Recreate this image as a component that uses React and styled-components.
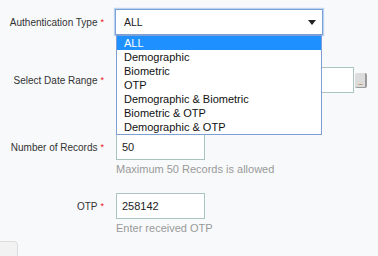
import React from 'react';
import styled, { createGlobalStyle } from 'styled-components';

const GlobalStyle = createGlobalStyle`
    html, body {
        margin: 0;
        padding: 0;
        background: #f8f9fb;
        font-family: "Liberation Sans", Arial, sans-serif;
        overflow: hidden;
    }
`

const Form = styled.div`
    padding-top: 9px;
    width: 378px;
    height: 256px;
    box-sizing: border-box;
    overflow: hidden;
`

const FormGroup = styled.div`
    display: grid;
    grid-template-columns: 104px 1fr;
    column-gap: 12px;
    margin-bottom: ${props => props.gap}px;
`

const Label = styled.div`
    height: 26px;
    display: flex;
    align-items: center;
    justify-content: flex-end;
    font-size: 10px;
    color: #333;
    white-space: nowrap;
`

const Required = styled.span`
    color: #e8101a;
    margin-left: 3px;
    font-size: 9px;
`

const Field = styled.div`
    display: flex;
    flex-direction: column;
    align-items: flex-start;
`

const SelectWrap = styled.div`
    position: relative;
    margin-left: -1px;
    z-index: 2;
`

const SelectBox = styled.div`
    width: 208px;
    height: 26px;
    box-sizing: border-box;
    border: 1px solid #7aa0d6;
    box-shadow: 0 0 1px 1px rgba(140, 180, 235, 0.55);
    background: #fff;
    display: flex;
    align-items: center;
    justify-content: space-between;
    padding: 0 6px 0 8px;
    font-size: 10.5px;
    color: #222;
`

const Arrow = styled.span`
    width: 0;
    height: 0;
    border-left: 4px solid transparent;
    border-right: 4px solid transparent;
    border-top: 5px solid #222;
    margin-top: 1px;
`

const OptionList = styled.ul`
    position: absolute;
    top: 100%;
    left: 1px;
    width: 206px;
    box-sizing: border-box;
    margin: 0;
    padding: 0;
    list-style: none;
    background: #fff;
    border: 1px solid #7f9ed4;
`

const Option = styled.li`
    height: 14px;
    line-height: 14px;
    padding-left: 7px;
    font-size: 11px;
    color: ${props => props.selected ? '#fff' : '#111'};
    background: ${props => props.selected ? '#1e90ff' : 'transparent'};
    white-space: nowrap;
`

const InputRow = styled.div`
    display: flex;
    align-items: center;
`

const Input = styled.div`
    width: ${props => props.width}px;
    height: 26px;
    box-sizing: border-box;
    border: 1px solid #aac4c0;
    background: #fff;
    display: flex;
    align-items: center;
    padding-left: 5px;
    font-size: 11px;
    color: #222;
`

const PickerButton = styled.div`
    width: 12px;
    height: 15px;
    margin-left: 1px;
    box-sizing: border-box;
    background: #dcdcdc;
    border-right: 2px solid #9a9a9a;
    border-bottom: 1px solid #9a9a9a;
    border-radius: 2px;
    display: flex;
    align-items: flex-end;
    justify-content: center;
    font-size: 9px;
    line-height: 9px;
    color: #b07a30;
    letter-spacing: -1px;
`

const Help = styled.div`
    margin-top: 1px;
    font-size: 11px;
    line-height: 16px;
    color: #999;
`

const Footer = styled.div`
    margin-top: 5px;
`

const GhostButton = styled.div`
    width: 48px;
    height: 30px;
    margin-left: -30px;
    box-sizing: border-box;
    border: 1px solid #dcdcdc;
    border-radius: 4px;
    background: #f2f2f3;
`

const authTypes = [
    'ALL',
    'Demographic',
    'Biometric',
    'OTP',
    'Demographic & Biometric',
    'Biometric & OTP',
    'Demographic & OTP',
]

class App extends React.Component {
    render(){
        return(
            <Form>
                <GlobalStyle/>
                <FormGroup gap={32}>
                    <Label>Authentication Type<Required>*</Required></Label>
                    <Field>
                        <SelectWrap>
                            <SelectBox>
                                ALL
                                <Arrow/>
                            </SelectBox>
                            <OptionList>
                                {authTypes.map(t => (
                                    <Option key={t} selected={t === 'ALL'}>{t}</Option>
                                ))}
                            </OptionList>
                        </SelectWrap>
                    </Field>
                </FormGroup>
                <FormGroup gap={41}>
                    <Label>Select Date Range<Required>*</Required></Label>
                    <Field>
                        <InputRow>
                            <Input width={238}/>
                            <PickerButton>...</PickerButton>
                        </InputRow>
                    </Field>
                </FormGroup>
                <FormGroup gap={16}>
                    <Label>Number of Records<Required>*</Required></Label>
                    <Field>
                        <Input width={89}>50</Input>
                        <Help>Maximum 50 Records is allowed</Help>
                    </Field>
                </FormGroup>
                <FormGroup gap={0}>
                    <Label>OTP<Required>*</Required></Label>
                    <Field>
                        <Input width={89}>258142</Input>
                        <Help>Enter received OTP</Help>
                    </Field>
                </FormGroup>
                <Footer>
                    <GhostButton/>
                </Footer>
            </Form>
        )
    }
}

export default App;
